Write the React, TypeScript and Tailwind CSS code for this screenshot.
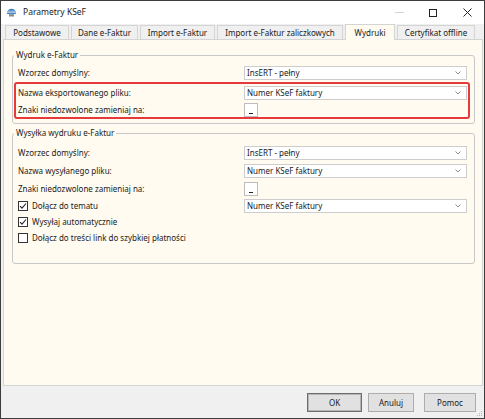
import React from "react";

function Chevron() {
  return (
    <svg width="6" height="4" viewBox="0 0 6 4" className="shrink-0">
      <polyline points="0.5,0.5 3,3 5.5,0.5" fill="none" stroke="#8c8c8c" strokeWidth="1" />
    </svg>
  );
}

function Combo({ text }: { text: string }) {
  return (
    <div className="w-[223px] h-[14px] bg-white border border-[#cdcdcd] flex items-center justify-between pl-[2px] pr-[5px]">
      <span>{text}</span>
      <Chevron />
    </div>
  );
}

function SmallBtn() {
  return (
    <div className="w-[14px] h-[14px] bg-white border border-[#bdbdbd] flex items-end justify-center pb-[2px]">
      <span className="block w-[4px] h-[1px] bg-[#222]" />
    </div>
  );
}

function Row({ h, label, children }: { h: string; label: React.ReactNode; children?: React.ReactNode }) {
  return (
    <div className={`flex items-center ${h}`}>
      <div className="w-[226px] shrink-0">{label}</div>
      {children}
    </div>
  );
}

function Check({ checked, label }: { checked: boolean; label: string }) {
  return (
    <div className="flex items-center gap-[4px]">
      <div className="w-[10px] h-[10px] border border-[#333] bg-white flex items-center justify-center">
        {checked && (
          <svg width="8" height="8" viewBox="0 0 8 8">
            <polyline points="1,4.2 3,6.2 7,1.5" fill="none" stroke="#222" strokeWidth="1.1" />
          </svg>
        )}
      </div>
      <span>{label}</span>
    </div>
  );
}

function Tab({ w, label, active }: { w: string; label: string; active?: boolean }) {
  if (active) {
    return (
      <div
        className={`${w} h-[16px] mb-[-1px] relative z-10 bg-[#fffbf0] border border-b-0 border-[#d4d4d4] flex items-center justify-center`}
      >
        {label}
      </div>
    );
  }
  return (
    <div className={`${w} h-[14px] bg-[#f0f0f0] border border-b-0 border-[#d4d4d4] flex items-center justify-center`}>
      {label}
    </div>
  );
}

export default function App() {
  return (
    <div className="w-[485px] h-[419px] border border-[#3c3c3c] bg-[#f0f0f0] flex flex-col font-['Noto_Sans',sans-serif] text-[8px] leading-none text-[#1a1a1a] overflow-hidden">
      {/* Title bar */}
      <div className="h-[23px] bg-white flex items-center shrink-0">
        <div className="pl-[5px] flex items-center">
          <svg width="11" height="9" viewBox="0 0 11 9">
            <path d="M1,6 C1,2.5 3,0.8 5.5,0.8 C8,0.8 10,2.5 10,6 Z" fill="#3a7fc4" />
            <path d="M2,3.2 H9 M1.3,4.6 H9.7" stroke="#ffffff" strokeWidth="0.6" />
            <rect x="3" y="6.2" width="5" height="2.3" fill="#8a8a8a" />
          </svg>
          <span className="ml-[6px] text-[8.5px]">Parametry KSeF</span>
        </div>
        <div className="ml-auto flex h-full">
          <div className="w-[34px] flex items-center justify-center">
            <span className="block w-[9px] h-[1px] bg-[#d4d4d4]" />
          </div>
          <div className="w-[34px] flex items-center justify-center">
            <span className="block w-[8px] h-[8px] border border-[#222]" />
          </div>
          <div className="w-[34px] flex items-center justify-center">
            <svg width="9" height="9" viewBox="0 0 9 9">
              <path d="M0.5,0.5 L8.5,8.5 M8.5,0.5 L0.5,8.5" stroke="#222" strokeWidth="1" />
            </svg>
          </div>
        </div>
      </div>

      {/* Tabs */}
      <div className="h-[15px] flex items-end gap-[2px] pl-[4px] shrink-0">
        <Tab w="w-[64px]" label="Podstawowe" />
        <Tab w="w-[67px]" label="Dane e-Faktur" />
        <Tab w="w-[75px]" label="Import e-Faktur" />
        <Tab w="w-[126px]" label="Import e-Faktur zaliczkowych" />
        <Tab w="w-[50px]" label="Wydruki" active />
        <Tab w="w-[78px]" label="Certyfikat offline" />
      </div>

      {/* Panel */}
      <div className="w-[480px] h-[347px] ml-[2px] shrink-0 bg-[#fffbf0] border border-[#d4d4d4] pt-[9px] pl-[8px]">
        <fieldset className="w-[463px] border border-[#c9c9c9] rounded-[3px] pl-[5px] pr-[7px] pt-[3px] pb-[4px]">
          <legend className="ml-[-4px] px-[2px] leading-[12px]">Wydruk e-Faktur</legend>
          <Row h="h-[18px]" label="Wzorzec domyślny:">
            <Combo text="InsERT - pełny" />
          </Row>
          <div className="ml-[-4px] mr-[-3px] border-2 border-[#e5393b] rounded-[3px] pl-[2px] pr-[1px]">
            <Row h="h-[18px]" label="Nazwa eksportowanego pliku:">
              <Combo text="Numer KSeF faktury" />
            </Row>
            <Row h="h-[15px]" label="Znaki niedozwolone zamieniaj na:">
              <SmallBtn />
            </Row>
          </div>
        </fieldset>

        <fieldset className="w-[463px] mt-[3px] border border-[#c9c9c9] rounded-[3px] pl-[5px] pr-[7px] pt-[4px] pb-[18px]">
          <legend className="ml-[-4px] px-[2px] leading-[12px]">Wysyłka wydruku e-Faktur</legend>
          <Row h="h-[19px]" label="Wzorzec domyślny:">
            <Combo text="InsERT - pełny" />
          </Row>
          <Row h="h-[18px]" label="Nazwa wysyłanego pliku:">
            <Combo text="Numer KSeF faktury" />
          </Row>
          <Row h="h-[18px]" label="Znaki niedozwolone zamieniaj na:">
            <SmallBtn />
          </Row>
          <Row h="h-[16px]" label={<Check checked label="Dołącz do tematu" />}>
            <Combo text="Numer KSeF faktury" />
          </Row>
          <div className="h-[16px] flex items-center">
            <Check checked label="Wysyłaj automatycznie" />
          </div>
          <div className="h-[15px] flex items-center">
            <Check checked={false} label="Dołącz do treści link do szybkiej płatności" />
          </div>
        </fieldset>
      </div>

      {/* Footer */}
      <div className="flex-1 relative flex justify-end items-start pt-[7px] pr-[8px] gap-[6px]">
        <div className="w-[55px] h-[19px] bg-[#e1e1e1] border border-[#6e6e6e] shadow-[inset_0_0_0_1px_#b5b5b5] flex items-center justify-center">
          OK
        </div>
        <div className="w-[46px] h-[19px] bg-[#e1e1e1] border border-[#adadad] flex items-center justify-center">
          Anuluj
        </div>
        <div className="w-[52px] h-[19px] ml-[4px] bg-[#e1e1e1] border border-[#adadad] flex items-center justify-center">
          Pomoc
        </div>
        <svg width="6" height="6" viewBox="0 0 6 6" className="absolute right-[1px] bottom-[1px]">
          <rect x="4" y="0" width="1" height="1" fill="#b0b0b0" />
          <rect x="2" y="2" width="1" height="1" fill="#b0b0b0" />
          <rect x="4" y="2" width="1" height="1" fill="#b0b0b0" />
          <rect x="0" y="4" width="1" height="1" fill="#b0b0b0" />
          <rect x="2" y="4" width="1" height="1" fill="#b0b0b0" />
          <rect x="4" y="4" width="1" height="1" fill="#b0b0b0" />
        </svg>
      </div>
    </div>
  );
}
